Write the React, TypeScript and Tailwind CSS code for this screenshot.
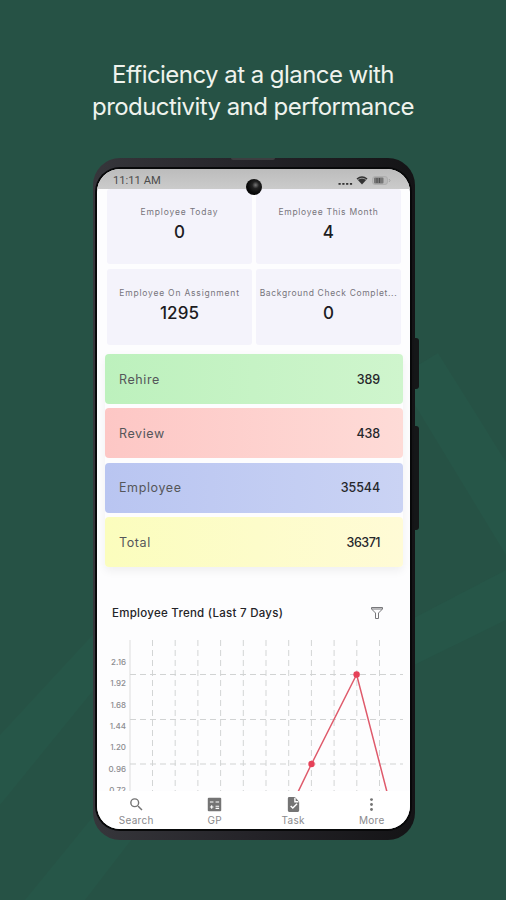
import React from "react";

const inter = "font-['Inter','Noto_Sans',sans-serif]";

function Stat({ label, value, size, labelClass }: { label: string; value: string; size: string; labelClass: string }) {
  return (
    <div className={`flex min-w-0 flex-col items-center rounded-[3px] bg-[#f4f3fb] ${size}`}>
      <div className={`${inter} whitespace-nowrap text-[8.5px] leading-[13px] text-[#77757c] ${labelClass}`}>{label}</div>
      <div className={`${inter} mt-[2px] text-[17px] font-medium leading-[22px] tracking-[0.1px] text-[#1c1b22]`}>{value}</div>
    </div>
  );
}

function Bar({ label, value, tone, valueClass }: { label: string; value: string; tone: string; valueClass: string }) {
  return (
    <div className={`flex h-[50px] items-center justify-between rounded-[4px] bg-linear-to-r pl-[14px] pr-[23px] pt-[2px] ${tone}`}>
      <span className={`${inter} text-[12.5px] tracking-[0.6px] text-[#55565a]`}>{label}</span>
      <span className={`${inter} text-[12.5px] font-medium text-[#26272b] ${valueClass}`}>{value}</span>
    </div>
  );
}

function Backdrop() {
  return (
    <svg className="absolute inset-0 h-full w-full" viewBox="0 0 506 900">
      <rect width="506" height="900" fill="#265245" />
      <g fill="#265648">
        <path d="M410 370L438 353L506 462V555L410 397Z" />
        <path d="M410 620L506 570V620L410 667Z" />
        <path d="M0 735L100 627V682L0 805Z" />
        <path d="M25 900L100 808L135 835L85 900Z" />
      </g>
    </svg>
  );
}

const columns = Array.from({ length: 11 }, (_, i) => 25.5 + i * 22.7);
const ticks = ["2.16", "1.92", "1.68", "1.44", "1.20", "0.96", "0.72"];

function Chart() {
  return (
    <div className="mt-[16px] flex h-[152px] overflow-hidden">
      <div className={`${inter} flex w-[30px] shrink-0 flex-col pt-[11.5px] text-right text-[8px] font-medium text-[#8c8c90]`}>
        {ticks.map((t) => (
          <span key={t} className="h-[21.45px] shrink-0 pr-px leading-[21.45px]">{t}</span>
        ))}
      </div>
      <svg className="h-[152px] w-[276px] shrink-0" viewBox="0 0 276 152" fill="none">
        <path d="M3 0V152" stroke="#dddddd" />
        {columns.map((x) => (
          <path key={x} d={`M${x} 0V151`} stroke="#d3d5d5" strokeDasharray="6 4" />
        ))}
        {[34.5, 79.5, 124].map((y) => (
          <path key={y} d={`M3 ${y}H276`} stroke="#d1d3d3" strokeDasharray="6 4" />
        ))}
        <path d="M3 151.5H276" stroke="#ececec" />
        <path d="M171 152L184.5 124L229.6 34.5L260 152" stroke="#df5a6b" strokeWidth="1.5" />
        <circle cx="184.5" cy="124" r="3.2" fill="#e64158" />
        <circle cx="229.6" cy="34.5" r="3.2" fill="#e64158" />
      </svg>
    </div>
  );
}

function Tab({ label, children }: { label: string; children: React.ReactNode }) {
  return (
    <div className="flex w-[78.5px] shrink-0 flex-col items-center">
      <svg className="h-[17px] w-[17px]" viewBox="0 0 24 24" fill="#747474">{children}</svg>
      <span className={`${inter} mt-px text-[10px] leading-[13px] tracking-[0.3px] text-[#8a8a8d]`}>{label}</span>
    </div>
  );
}

export default function App() {
  return (
    <main className={`${inter} relative h-[900px] w-[506px] overflow-hidden bg-[#265245]`}>
      <Backdrop />
      <div className="relative flex flex-col items-center">
        <h1 className="mt-[59px] h-[99px] text-center text-[24px] font-normal leading-[32px] tracking-[-0.55px] text-[#eff3ed]">
          Efficiency at a glance with
          <br />
          productivity and performance
        </h1>

        <section className="relative ml-[2px] h-[682px] w-[322px] rounded-[27px] bg-linear-to-r from-[#36363b] via-[#242328] to-[#141416] pl-[4px] pr-[5px] pt-[11px]">
          <div className="absolute -right-[4px] top-[180px] h-[51px] w-[5px] rounded-r-[3px] bg-[#151718]" />
          <div className="absolute -right-[4px] top-[268px] h-[104px] w-[5px] rounded-r-[3px] bg-[#151718]" />
          <div className="absolute left-[138px] top-0 h-[2px] w-[44px] rounded-b bg-[#3c3e40]" />
          <div className="flex h-[660px] flex-col overflow-hidden rounded-[23px] bg-[#fdfdfe] shadow-[0_0_0_2px_#08090a]">
            <header className="flex h-[20px] shrink-0 items-center justify-between bg-linear-to-b from-[#bcbcbc] to-[#cbcbcb] pl-[16px] pr-[19px] pt-[4px]">
              <span className="font-['Roboto','Noto_Sans',sans-serif] text-[11.2px] text-[#4c4c4c]">11:11 AM</span>
              <svg className="h-[12px] w-[54px]" viewBox="0 0 54 12" fill="#333">
                <rect x="1.5" y="8" width="2.2" height="1.8" />
                <rect x="5.3" y="8" width="2.2" height="1.8" />
                <rect x="9.1" y="8" width="2.2" height="1.8" />
                <rect x="12.9" y="8" width="2.2" height="1.8" />
                <path d="M19.5 3.5Q25 -1 30.5 3.5L25 9.5Z" />
                <path d="M20.5 4.8Q25 1.7 29.5 4.8" fill="none" stroke="#bbb" strokeWidth=".7" />
                <rect x="35.5" y="1.5" width="15" height="8" rx="2.5" fill="#bababa" stroke="#a8a8a8" strokeWidth=".7" />
                <rect x="37" y="2.5" width="9.5" height="6" rx="1" fill="#777" />
                <path d="M40 3V8M42.5 3V8" stroke="#505050" />
                <path d="M52 4Q54 5.5 52 7" stroke="#a3a3a3" fill="none" />
              </svg>
            </header>

            <div className="flex shrink-0 flex-col pl-[8px] pr-[7px]">
              <div className="grid grid-cols-2 gap-x-[4px] gap-y-[5px] pl-[2px] pr-[2px]">
                <Stat label="Employee Today" value="0" size="h-[75px] pt-[17px]" labelClass="tracking-[0.83px]" />
                <Stat label="Employee This Month" value="4" size="h-[75px] pt-[17px]" labelClass="tracking-[0.7px]" />
                <Stat label="Employee On Assignment" value="1295" size="h-[76px] pt-[18px]" labelClass="tracking-[0.8px]" />
                <Stat label="Background Check Complet..." value="0" size="h-[76px] pt-[18px]" labelClass="tracking-[0.66px]" />
              </div>
              <div className="mt-[9px] flex flex-col gap-[4.4px] rounded-[4px] shadow-[0_4px_10px_rgba(0,0,0,0.06)]">
                <Bar label="Rehire" value="389" tone="from-[#bdf1bd] to-[#cff5cd]" valueClass="tracking-[-0.1px]" />
                <Bar label="Review" value="438" tone="from-[#fdc7c5] to-[#fedbd7]" valueClass="tracking-[-0.1px]" />
                <Bar label="Employee" value="35544" tone="from-[#b9c5f1] to-[#cad3f4]" valueClass="tracking-[-0.1px]" />
                <Bar label="Total" value="36371" tone="from-[#fbfdbd] to-[#fffbd6]" valueClass="tracking-[-0.5px]" />
              </div>
            </div>

            <div className="mt-[36px] flex h-[21px] shrink-0 items-center justify-between pl-[15px] pr-[26px]">
              <h2 className="text-[11.5px] font-medium tracking-[0.27px] text-[#242428]">Employee Trend (Last 7 Days)</h2>
              <svg className="mb-[2px] h-[14px] w-[14px]" viewBox="0 0 14 14" fill="none" stroke="#77777a" strokeWidth="1">
                <path d="M1.5 1.5H12.5V3L8.5 7V12.5H5.5V7L1.5 3ZM2 3H12" />
              </svg>
            </div>
            <Chart />
            <nav className="flex h-[38px] shrink-0 bg-white pt-[5px]">
              <Tab label="Search">
                <path d="M15.5 14h-.79l-.28-.27A6.47 6.47 0 0 0 16 9.5 6.5 6.5 0 1 0 9.5 16c1.61 0 3.09-.59 4.23-1.57l.27.28v.79l5 4.99L20.49 19zm-6 0a4.5 4.5 0 1 1 0-9 4.5 4.5 0 0 1 0 9" />
              </Tab>
              <Tab label="GP">
                <path d="M20 2.5H4a1.5 1.5 0 0 0-1.5 1.5v16a1.5 1.5 0 0 0 1.5 1.5h16a1.5 1.5 0 0 0 1.5-1.5V4A1.5 1.5 0 0 0 20 2.5" />
                <path d="M5.5 8.5h5M13.5 8.5h5M5.5 15.5h5M8 13v5M13.5 14.5h5M13.5 17.5h5" stroke="#fff" strokeWidth="1.6" />
              </Tab>
              <Tab label="Task">
                <path d="M14 1.5H6a2 2 0 0 0-2 2v17a2 2 0 0 0 2 2h12a2 2 0 0 0 2-2V8z" />
                <path d="M14 2.5v5.5h5M8 14l3 3 6-6" fill="none" stroke="#fff" strokeWidth="2" />
              </Tab>
              <Tab label="More">
                <circle cx="12" cy="5" r="2" />
                <circle cx="12" cy="12" r="2" />
                <circle cx="12" cy="19" r="2" />
              </Tab>
            </nav>
          </div>
          <div className="absolute left-[153px] top-[21px] h-[16px] w-[16px] rounded-full bg-[radial-gradient(circle_at_60%_38%,#777_0,#222_25%,#080808_60%)]" />
        </section>
      </div>
    </main>
  );
}
